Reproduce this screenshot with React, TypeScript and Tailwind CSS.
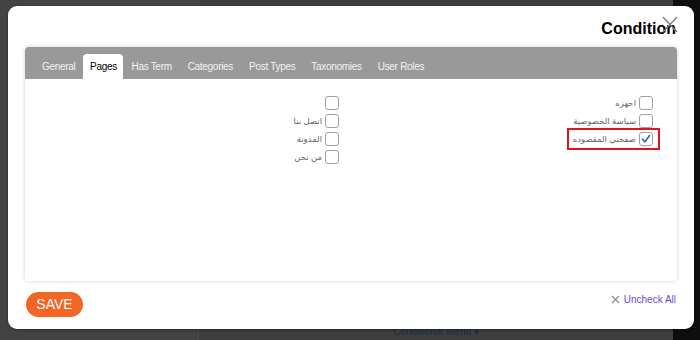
import React from "react";

const font = { fontFamily: '"Liberation Sans", "DejaVu Sans", Arial, sans-serif' };

function Box({ checked }: { checked?: boolean }) {
  return (
    <span className="w-[14px] h-[14px] rounded-[3px] border border-[#a0a0a0] bg-white flex items-center justify-center shrink-0">
      {checked && (
        <svg width="10" height="10" viewBox="0 0 10 10">
          <path d="M1.5 5.2 L4 7.8 L8.6 1.6" fill="none" stroke="#2a6fc9" strokeWidth="1.7" strokeLinecap="round" strokeLinejoin="round" />
        </svg>
      )}
    </span>
  );
}

function Item({ label, checked, highlight }: { label: string; checked?: boolean; highlight?: boolean }) {
  return (
    <div className="h-[18px] flex items-center">
      <div className={highlight ? "flex items-center gap-[3px] border-2 border-[#e0141e] h-[22px] pr-[5px] pl-[4px] mr-[-7px] whitespace-nowrap" : "flex items-center gap-[3px] whitespace-nowrap"}>
        <Box checked={checked} />
        <span className="text-[8.5px] text-[#666] leading-none">{label}</span>
      </div>
    </div>
  );
}

export default function App() {
  const tabs = ["General", "Pages", "Has Term", "Categories", "Post Types", "Taxonomies", "User Roles"];
  return (
    <div className="relative w-[700px] h-[340px] overflow-hidden" style={font}>
      <div className="flex h-full">
        <div className="w-[198px] bg-[#434343]" />
        <div className="flex-1 bg-[#3e3e3e] border-l border-[#4c4c4c] flex flex-col justify-end items-center">
          <span className="text-[10px] leading-[12px] text-[#1e2b4e] mb-[2px]">Conditional Menu ▾</span>
        </div>
        <div className="w-[27px] bg-[#0e0e0e]" />
      </div>

      <div className="absolute left-[8px] top-[6px] w-[686px] h-[323px] bg-white rounded-[9px] shadow-[0_1px_3px_rgba(0,0,0,0.4)] flex flex-col">
        <div className="relative h-[41px] flex items-end justify-end pr-[18px]">
          <span className="text-[16px] font-bold text-black leading-none mb-[10px]">Condition</span>
          <svg className="absolute left-[654px] top-[10px]" width="16" height="17" viewBox="0 0 16 17">
            <path d="M1 1 L15 16 M15 1 L1 16" stroke="#7a7a7a" strokeWidth="1.3" fill="none" />
          </svg>
        </div>

        <div className="mx-[17px] h-[234px] rounded-[4px] shadow-[0_0_4px_rgba(0,0,0,0.18)] flex flex-col overflow-hidden">
          <div className="h-[32px] bg-[#999999] flex items-end pl-[9px]">
            {tabs.map((t) =>
              t === "Pages" ? (
                <div key={t} className="h-[25px] w-[40px] bg-white rounded-t-[4px] flex items-center justify-center text-[10px] tracking-[-0.3px] text-black">
                  {t}
                </div>
              ) : (
                <div key={t} className="h-[25px] px-[8px] flex items-center text-[10px] tracking-[-0.3px] text-[#f2f2f2]">
                  {t}
                </div>
              )
            )}
          </div>
          <div dir="rtl" className="flex-1 bg-white grid grid-cols-2 pr-[24px] pt-[15px] content-start">
            <div className="flex flex-col">
              <Item label="اجهزه" />
              <Item label="سياسة الخصوصية" />
              <Item label="صفحتي المقصوده" checked highlight />
            </div>
            <div className="flex flex-col">
              <Item label="" />
              <Item label="اتصل بنا" />
              <Item label="المدونة" />
              <Item label="من نحن" />
            </div>
          </div>
        </div>

        <div className="flex items-center justify-between mx-[18px] mt-[11px]">
          <button className="h-[25px] w-[57px] rounded-full bg-[#f26522] text-white text-[14px] flex items-center justify-center">
            SAVE
          </button>
          <div className="flex items-center gap-[4px] mb-[10px]">
            <svg width="9" height="9" viewBox="0 0 9 9">
              <path d="M1 1 L8 8 M8 1 L1 8" stroke="#8a8a8a" strokeWidth="1.2" fill="none" />
            </svg>
            <span className="text-[10px] text-[#6f4ad6]">Uncheck All</span>
          </div>
        </div>
      </div>
    </div>
  );
}
